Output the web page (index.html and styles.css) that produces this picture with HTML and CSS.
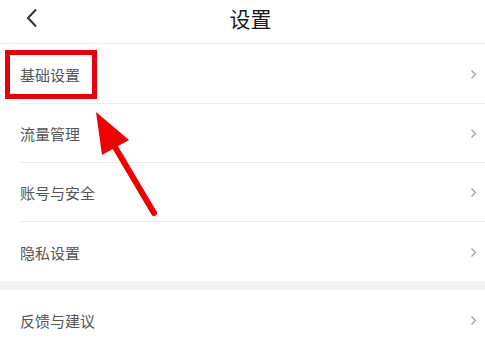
FILE: index.html
```html
<!DOCTYPE html>
<html lang="zh">
<head>
<meta charset="utf-8">
<link rel="stylesheet" href="styles.css">
</head>
<body>
<div class="page">
  <header class="topbar">
    <span class="back">
      <svg width="12" height="20" viewBox="0 0 12 20"><path d="M10 1.5 L2 10 L10 18.5" fill="none" stroke="#333" stroke-width="2"/></svg>
    </span>
    <h1 class="title">设置</h1>
  </header>
  <ul class="group">
    <li class="row"><span class="label">基础设置</span><span class="chev"><svg width="7" height="11" viewBox="0 0 7 11"><path d="M1.5 1.5 L5.5 5.5 L1.5 9.5" fill="none" stroke="#a0a0a0" stroke-width="1.3"/></svg></span></li>
    <li class="row"><span class="label">流量管理</span><span class="chev"><svg width="7" height="11" viewBox="0 0 7 11"><path d="M1.5 1.5 L5.5 5.5 L1.5 9.5" fill="none" stroke="#a0a0a0" stroke-width="1.3"/></svg></span></li>
    <li class="row"><span class="label">账号与安全</span><span class="chev"><svg width="7" height="11" viewBox="0 0 7 11"><path d="M1.5 1.5 L5.5 5.5 L1.5 9.5" fill="none" stroke="#a0a0a0" stroke-width="1.3"/></svg></span></li>
    <li class="row"><span class="label">隐私设置</span><span class="chev"><svg width="7" height="11" viewBox="0 0 7 11"><path d="M1.5 1.5 L5.5 5.5 L1.5 9.5" fill="none" stroke="#a0a0a0" stroke-width="1.3"/></svg></span></li>
  </ul>
  <div class="gap"></div>
  <ul class="group">
    <li class="row"><span class="label">反馈与建议</span><span class="chev"><svg width="7" height="11" viewBox="0 0 7 11"><path d="M1.5 1.5 L5.5 5.5 L1.5 9.5" fill="none" stroke="#a0a0a0" stroke-width="1.3"/></svg></span></li>
  </ul>
  <div class="highlight"></div>
  <svg class="arrow" width="485" height="342" viewBox="0 0 485 342">
    <line x1="112" y1="142" x2="154" y2="213" stroke="#ee0000" stroke-width="6" stroke-linecap="round"/>
    <polygon points="96,112 102,155 129,140" fill="#ee0000"/>
  </svg>
</div>
</body>
</html>
```

FILE: styles.css
```css
* { box-sizing: border-box; }
html, body { margin: 0; padding: 0; background: #fff; }
body {
  width: 485px;
  height: 342px;
  overflow: hidden;
  font-family: "Noto Sans CJK SC", "Noto Sans", sans-serif;
}
.page { position: relative; width: 485px; height: 342px; }
.topbar {
  height: 44px;
  border-bottom: 1px solid #efefef;
  display: flex;
  align-items: center;
  justify-content: center;
  position: relative;
  padding-left: 16px;
}
.back {
  position: absolute;
  left: 26px;
  top: 8px;
  width: 12px;
  height: 20px;
  display: block;
}
.back svg { display: block; }
.title {
  margin: 0;
  font-size: 21px;
  font-weight: 400;
  color: #1a1a1a;
  line-height: 1;
  margin-top: -6px;
}
.group { list-style: none; margin: 0; padding: 0 0 0 20px; }
.row {
  height: 60px;
  border-bottom: 1px solid #ededed;
  display: flex;
  align-items: center;
  justify-content: space-between;
  padding-right: 8px;
  padding-top: 1px;
}
.row:nth-child(n+2) { height: 59px; }
.row:last-child { border-bottom: none; }
.label { font-size: 15px; color: #555; line-height: 1; }
.chev { display: flex; }
.chev svg { display: block; }
.gap { height: 9px; background: #f2f2f2; }
.highlight {
  position: absolute;
  left: 5px;
  top: 50px;
  width: 92px;
  height: 49px;
  border: 5px solid #e8000c;
}
.arrow { position: absolute; left: 0; top: 0; pointer-events: none; }
```
